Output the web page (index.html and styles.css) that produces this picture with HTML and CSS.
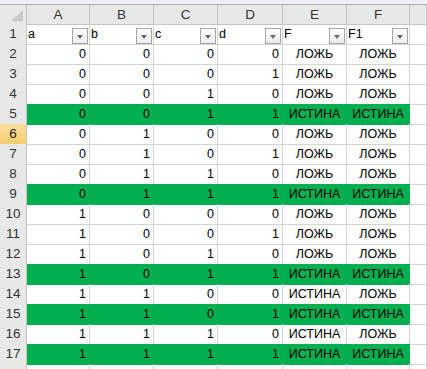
FILE: index.html
```html
<!DOCTYPE html>
<html lang="ru">
<head>
<meta charset="utf-8">
<title>Лист1</title>
<link rel="stylesheet" href="styles.css">
</head>
<body>
<div class="sheet">
  <div class="topline"></div>

  <div class="row colheads">
    <div class="corner">
      <svg width="12" height="11" viewBox="0 0 12 11"><polygon points="0,11 12,11 12,0" fill="#c9c9c9"/></svg>
    </div>
    <div class="ch">A</div><div class="ch">B</div><div class="ch">C</div><div class="ch">D</div><div class="ch">E</div><div class="ch">F</div><div class="ch"></div>
  </div>

  <div class="row">
    <div class="rh">1</div>
    <div class="c flt"><span>a</span><i class="btn"></i></div>
    <div class="c flt"><span>b</span><i class="btn"></i></div>
    <div class="c flt"><span>c</span><i class="btn"></i></div>
    <div class="c flt"><span>d</span><i class="btn"></i></div>
    <div class="c flt"><span>F</span><i class="btn"></i></div>
    <div class="c flt"><span>F1</span><i class="btn"></i></div>
    <div class="c"></div>
  </div>

  <div class="row"><div class="rh">2</div><div class="c n">0</div><div class="c n">0</div><div class="c n">0</div><div class="c n">0</div><div class="c b">ЛОЖЬ</div><div class="c b">ЛОЖЬ</div><div class="c"></div></div>
  <div class="row"><div class="rh">3</div><div class="c n">0</div><div class="c n">0</div><div class="c n">0</div><div class="c n">1</div><div class="c b">ЛОЖЬ</div><div class="c b">ЛОЖЬ</div><div class="c"></div></div>
  <div class="row"><div class="rh">4</div><div class="c n">0</div><div class="c n">0</div><div class="c n">1</div><div class="c n">0</div><div class="c b">ЛОЖЬ</div><div class="c b">ЛОЖЬ</div><div class="c"></div></div>
  <div class="row hit"><div class="rh">5</div><div class="c n">0</div><div class="c n">0</div><div class="c n">1</div><div class="c n">1</div><div class="c b">ИСТИНА</div><div class="c b">ИСТИНА</div><div class="c"></div></div>
  <div class="row"><div class="rh sel">6</div><div class="c n">0</div><div class="c n">1</div><div class="c n">0</div><div class="c n">0</div><div class="c b">ЛОЖЬ</div><div class="c b">ЛОЖЬ</div><div class="c"></div></div>
  <div class="row"><div class="rh">7</div><div class="c n">0</div><div class="c n">1</div><div class="c n">0</div><div class="c n">1</div><div class="c b">ЛОЖЬ</div><div class="c b">ЛОЖЬ</div><div class="c"></div></div>
  <div class="row"><div class="rh">8</div><div class="c n">0</div><div class="c n">1</div><div class="c n">1</div><div class="c n">0</div><div class="c b">ЛОЖЬ</div><div class="c b">ЛОЖЬ</div><div class="c"></div></div>
  <div class="row hit"><div class="rh">9</div><div class="c n">0</div><div class="c n">1</div><div class="c n">1</div><div class="c n">1</div><div class="c b">ИСТИНА</div><div class="c b">ИСТИНА</div><div class="c"></div></div>
  <div class="row"><div class="rh">10</div><div class="c n">1</div><div class="c n">0</div><div class="c n">0</div><div class="c n">0</div><div class="c b">ЛОЖЬ</div><div class="c b">ЛОЖЬ</div><div class="c"></div></div>
  <div class="row"><div class="rh">11</div><div class="c n">1</div><div class="c n">0</div><div class="c n">0</div><div class="c n">1</div><div class="c b">ЛОЖЬ</div><div class="c b">ЛОЖЬ</div><div class="c"></div></div>
  <div class="row"><div class="rh">12</div><div class="c n">1</div><div class="c n">0</div><div class="c n">1</div><div class="c n">0</div><div class="c b">ЛОЖЬ</div><div class="c b">ЛОЖЬ</div><div class="c"></div></div>
  <div class="row hit"><div class="rh">13</div><div class="c n">1</div><div class="c n">0</div><div class="c n">1</div><div class="c n">1</div><div class="c b">ИСТИНА</div><div class="c b">ИСТИНА</div><div class="c"></div></div>
  <div class="row"><div class="rh">14</div><div class="c n">1</div><div class="c n">1</div><div class="c n">0</div><div class="c n">0</div><div class="c b">ИСТИНА</div><div class="c b">ЛОЖЬ</div><div class="c"></div></div>
  <div class="row hit"><div class="rh">15</div><div class="c n">1</div><div class="c n">1</div><div class="c n">0</div><div class="c n">1</div><div class="c b">ИСТИНА</div><div class="c b">ИСТИНА</div><div class="c"></div></div>
  <div class="row"><div class="rh">16</div><div class="c n">1</div><div class="c n">1</div><div class="c n">1</div><div class="c n">0</div><div class="c b">ИСТИНА</div><div class="c b">ЛОЖЬ</div><div class="c"></div></div>
  <div class="row hit"><div class="rh">17</div><div class="c n">1</div><div class="c n">1</div><div class="c n">1</div><div class="c n">1</div><div class="c b">ИСТИНА</div><div class="c b">ИСТИНА</div><div class="c"></div></div>
  <div class="row"><div class="rh"></div><div class="c"></div><div class="c"></div><div class="c"></div><div class="c"></div><div class="c"></div><div class="c"></div><div class="c"></div></div>
</div>
</body>
</html>
```

FILE: styles.css
```css
html, body {
  margin: 0;
  padding: 0;
  background: #ffffff;
  overflow: hidden;
}

.sheet {
  width: 427px;
  height: 369px;
  overflow: hidden;
  font-family: "Liberation Sans", Arial, sans-serif;
  font-size: 12.5px;
  color: #000;
}

/* thin strip above the column headers */
.topline {
  height: 4px;
  background: #eef1f5;
  border-bottom: 1px solid #a9b0b8;
}

.row {
  display: grid;
  grid-template-columns: 27px 63px 64px 64px 65px 64px 63px 1fr;
  height: 20px;
}

.colheads {
  height: 19px;
}

/* column and row headers */
.corner,
.ch,
.rh {
  box-sizing: border-box;
  background: #e8e8e8;
  border-right: 1px solid #c5c5c5;
  border-bottom: 1px solid #c5c5c5;
  color: #333;
  text-align: center;
  line-height: 19px;
  font-size: 13.5px;
}

.corner {
  display: flex;
  align-items: flex-end;
  justify-content: flex-end;
  padding: 0 3px 3px 0;
}

.corner svg {
  display: block;
}

.rh {
  line-height: 20px;
}

.rh.sel {
  background: linear-gradient(#fbe0a0, #f6cd6c);
  border-bottom-color: #d6ad55;
  color: #222;
}

/* worksheet cells */
.c {
  box-sizing: border-box;
  border-right: 1px solid #d4d4d4;
  border-bottom: 1px solid #d4d4d4;
  line-height: 21px;
  white-space: nowrap;
  overflow: hidden;
}

.n {
  text-align: right;
  padding-right: 3px;
}

.b {
  text-align: center;
}

/* filter header cells with dropdown button */
.flt {
  display: flex;
  justify-content: space-between;
  align-items: flex-end;
  padding-left: 1px;
  padding-right: 1px;
}

.flt span {
  line-height: 20px;
}

.btn {
  box-sizing: border-box;
  width: 16px;
  height: 16px;
  border: 1px solid #a6a6a6;
  background: linear-gradient(#ffffff, #ececec);
  display: flex;
  align-items: center;
  justify-content: center;
}

.btn::after {
  content: "";
  width: 0;
  height: 0;
  border-left: 3.5px solid transparent;
  border-right: 3.5px solid transparent;
  border-top: 4px solid #6a6a6a;
  margin-top: 1px;
}

/* highlighted rows where both functions are true */
.hit .c:not(:last-child) {
  background: #00b050;
  border-right-color: #00b050;
  border-bottom-color: #00b050;
}
```
